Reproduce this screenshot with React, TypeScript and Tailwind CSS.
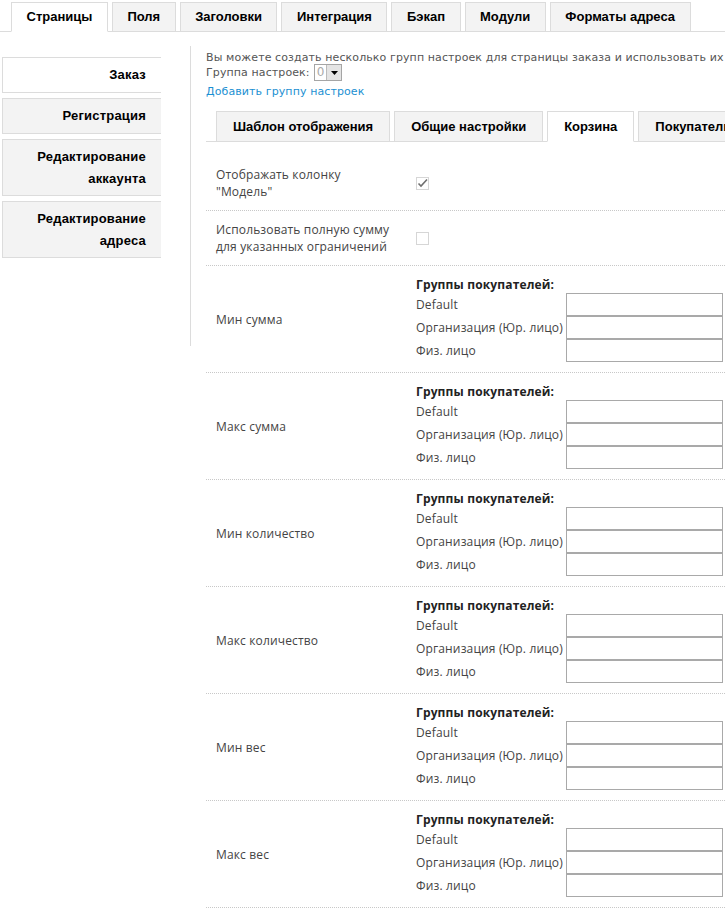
import React from 'react';

const topTabs = ['Страницы', 'Поля', 'Заголовки', 'Интеграция', 'Бэкап', 'Модули', 'Форматы адреса'];
const innerTabs = ['Шаблон отображения', 'Общие настройки', 'Корзина', 'Покупатель'];
const pages = [
  { label: 'Заказ', lines: 1, active: true },
  { label: 'Регистрация', lines: 1 },
  { label: 'Редактирование аккаунта', lines: 2 },
  { label: 'Редактирование адреса', lines: 2 },
];
const limits = ['Мин сумма', 'Макс сумма', 'Мин количество', 'Макс количество', 'Мин вес', 'Макс вес'];
const groups = ['Default', 'Организация (Юр. лицо)', 'Физ. лицо'];

const tabFont = { fontFamily: '"Liberation Sans", Arial, sans-serif' };
const bodyFont = { fontFamily: '"DejaVu Sans", Verdana, sans-serif' };
const tableFont = { fontFamily: '"Open Sans", sans-serif' };

function Checkbox({ checked }: { checked?: boolean }) {
  return (
    <span className="flex h-[13px] w-[13px] items-center justify-center border border-[#d6d6d6] bg-white">
      {checked && (
        <svg width="11" height="10" viewBox="0 0 11 10">
          <path d="M1.5 5.5 L4 8 L10 1.5" fill="none" stroke="#6f6f6f" strokeWidth="1.6" />
        </svg>
      )}
    </span>
  );
}

function GroupRow({ title }: { title: string }) {
  return (
    <div className="flex border-b border-dotted border-[#c8c8c8] py-[10px]">
      <div className="flex w-[210px] shrink-0 items-center pl-[10px]">{title}</div>
      <div className="flex flex-col">
        <div className="h-[17px] font-bold leading-[17px] text-[#222]">Группы покупателей:</div>
        {groups.map(g => (
          <div key={g} className="flex h-[23px] items-center">
            <span className="w-[150px] whitespace-nowrap">{g}</span>
            <input className="h-[23px] w-[157px] border border-[#a9a9a9] bg-white" />
          </div>
        ))}
      </div>
    </div>
  );
}

export default function App() {
  return (
    <div className="w-[725px] overflow-hidden bg-white pt-[2px]">
      {/* top tabs */}
      <div className="flex gap-[4px] border-b border-[#dcdcdc] pl-[11px]" style={tabFont}>
        {topTabs.map((t, i) => (
          <div
            key={t}
            className={`-mb-px flex h-[30px] shrink-0 items-center border border-[#dcdcdc] px-[14.5px] text-[13px] font-bold whitespace-nowrap text-black ${
              i === 0 ? 'border-b-white bg-white' : 'bg-[#f3f3f3]'
            }`}
          >
            {t}
          </div>
        ))}
      </div>

      <div className="flex">
        {/* left page menu */}
        <div className="mt-[14px] h-[300px] w-[191px] shrink-0 border-r border-[#dcdcdc] pt-[11px]">
          <div className="ml-[2px] flex w-[159px] flex-col gap-[5px]" style={tabFont}>
            {pages.map(p => (
              <div
                key={p.label}
                className={`flex items-center justify-end border-y border-l border-[#dcdcdc] pr-[15px] pl-4 text-right text-[13px] font-bold leading-[22px] tracking-[0.2px] text-black ${
                  p.lines === 2 ? 'h-[57px]' : 'h-[36px]'
                } ${p.active ? 'bg-white' : 'bg-[#f3f3f3]'}`}
              >
                {p.label}
              </div>
            ))}
          </div>
        </div>

        {/* page settings */}
        <div className="w-[560px] shrink-0 pt-[19px] pl-[15px]">
          <div className="text-[11px] leading-[15px] tracking-[0.1px] whitespace-nowrap text-[#555]" style={bodyFont}>
            <div className="leading-[13px]">Вы можете создать несколько групп настроек для страницы заказа и использовать их</div>
            <div className="flex h-[17px] items-center">
              <span>Группа настроек:</span>
              <span className="ml-[4px] flex h-[17px] items-center border border-[#a5a5a5] bg-white">
                <span className="px-[2px] text-[12px] tracking-normal text-[#aaa]">0</span>
                <span className="flex h-[15px] w-[15px] items-center justify-center border-l border-[#bbb] bg-[#e4e4e4]">
                  <svg width="7" height="4" viewBox="0 0 7 4">
                    <path d="M0 0 H7 L3.5 4 Z" fill="#000" />
                  </svg>
                </span>
              </span>
            </div>
            <div className="mt-[3px] text-[#1b8fd2]">Добавить группу настроек</div>
          </div>

          {/* inner tabs */}
          <div className="mt-[12px] flex gap-[4px] border-b border-[#dcdcdc] pl-[10px]" style={tabFont}>
            {innerTabs.map(t => (
              <div
                key={t}
                className={`-mb-px flex h-[31px] shrink-0 items-center border border-[#dcdcdc] px-4 text-[13px] font-bold whitespace-nowrap text-black ${
                  t === 'Корзина' ? 'border-b-white bg-white' : 'bg-[#f3f3f3]'
                }`}
              >
                {t}
              </div>
            ))}
          </div>

          {/* cart limits */}
          <div className="mt-[14px] text-[12px] leading-[17px] tracking-[0.15px] text-[#444]" style={tableFont}>
            <div className="flex h-[55px] items-center border-b border-dotted border-[#c8c8c8]">
              <div className="w-[210px] pr-12 pl-[10px]">Отображать колонку "Модель"</div>
              <Checkbox checked />
            </div>
            <div className="flex h-[55px] items-center border-b border-dotted border-[#c8c8c8]">
              <div className="w-[210px] pr-4 pl-[10px]">Использовать полную сумму для указанных ограничений</div>
              <Checkbox />
            </div>
            {limits.map(l => (
              <GroupRow key={l} title={l} />
            ))}
          </div>
        </div>
      </div>
    </div>
  );
}
